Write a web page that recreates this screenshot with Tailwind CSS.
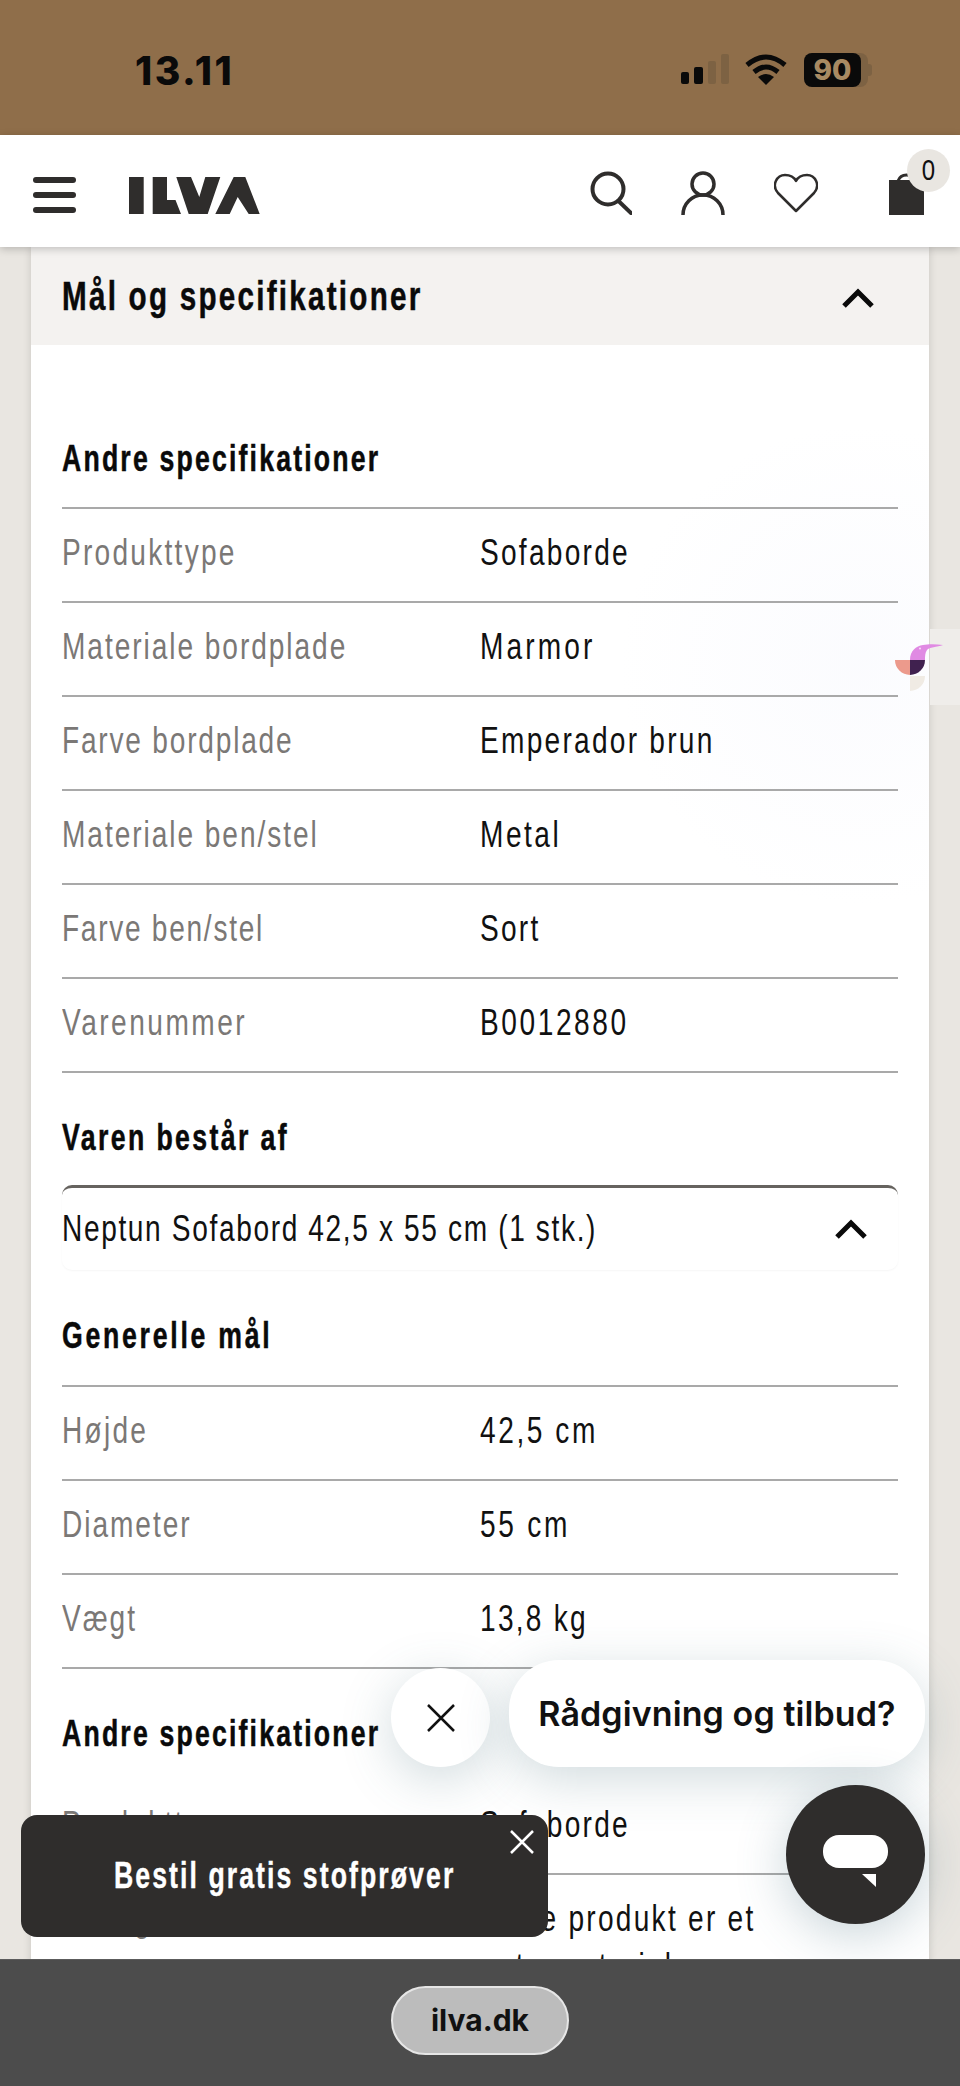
<!DOCTYPE html>
<html lang="en">
<head>
    <meta charset="UTF-8">
    <title>ILVA - Mål og specifikationer</title>
    <script src="https://cdn.jsdelivr.net/npm/@tailwindcss/browser@4"></script>
</head>
<body>
<div class="relative w-[960px] h-[2086px] overflow-hidden flex flex-col bg-[#e9e6e1] font-['Liberation_Sans',sans-serif]">

    <!-- status bar -->
    <div class="h-[135px] shrink-0 bg-[#8f6e4a] flex items-start justify-between pl-[135px] pr-[88px] pt-[47px]">
        <span class="font-['Inter',sans-serif] font-extrabold text-[39px] leading-[48px] text-[#0a0a0a] tracking-[2.5px]">13.11</span>
        <div class="flex items-center gap-[16px] pt-[6px]">
            <svg width="48" height="32" viewBox="0 0 48 32">
                <rect x="0" y="18" width="8" height="12" rx="2" fill="#0a0a0a"/>
                <rect x="13" y="13" width="9" height="17" rx="2" fill="#0a0a0a"/>
                <rect x="27" y="7" width="8" height="23" rx="2" fill="#7d6243"/>
                <rect x="40" y="0" width="8" height="30" rx="2" fill="#7d6243"/>
            </svg>
            <svg width="42" height="32" viewBox="0 0 42 32" fill="none" stroke="#0a0a0a" stroke-width="5">
                <path d="M2 11 Q21 -5 40 11"/>
                <path d="M9 18 Q21 8 33 18"/>
                <path d="M21 31 L13 23 Q21 17 29 23 Z" fill="#0a0a0a" stroke="none"/>
            </svg>
            <div class="relative w-[68px] h-[34px] ml-[1px]">
                <div class="absolute left-0 top-0 w-[64px] h-[34px] rounded-[8px] bg-[#7d6243]"></div>
                <div class="absolute right-0 top-[11px] w-[4px] h-[12px] rounded-r-[3px] bg-[#7d6243]"></div>
                <div class="absolute left-0 top-0 w-[57px] h-[34px] rounded-[8px] bg-[#0a0a0a] flex items-center justify-center font-['Inter',sans-serif] font-extrabold text-[28px] leading-none text-[#a88a62]">90</div>
            </div>
        </div>
    </div>

    <!-- header -->
    <div class="relative z-10 h-[112px] shrink-0 bg-white shadow-[0_2px_8px_rgba(0,0,0,0.22)] flex items-center pl-[33px] pr-[36px] pt-[8px]">
        <div class="flex flex-col gap-[9px] w-[43px]">
            <div class="h-[6px] rounded-full bg-[#2f2d2c]"></div>
            <div class="h-[6px] rounded-full bg-[#2f2d2c]"></div>
            <div class="h-[6px] rounded-full bg-[#2f2d2c]"></div>
        </div>
        <svg class="ml-[53px]" width="132" height="37" viewBox="0 0 132 37" fill="#2f2d2c">
            <rect x="0" y="0" width="14.700" height="37"/>
            <path d="M23.700 0H38V23H46.500L52 37H23.700Z"/>
            <path d="M47.300 0H62L70.300 20L76.300 0H91.300L78.700 37H59.700Z"/>
            <path d="M104.700 0H116.300L130.700 37H119.700L108.700 20L100.700 37H86.300Z"/>
        </svg>
        <div class="ml-auto flex items-center gap-[49px] -mt-[5px]">
            <svg width="42" height="44" viewBox="0 0 42 44" fill="none" stroke="#2f2d2c" stroke-width="4">
                <circle cx="18" cy="18" r="15.500"/>
                <path d="M28.500 30 L41 42" stroke-linecap="round"/>
            </svg>
            <svg width="44" height="44" viewBox="0 0 44 44" fill="none" stroke="#2f2d2c" stroke-width="3.500">
                <circle cx="22" cy="13" r="11"/>
                <path d="M2 44 A20 20 0 0 1 42 44"/>
            </svg>
            <svg width="44" height="40" viewBox="0 0 44 40" fill="none" stroke="#2f2d2c" stroke-width="2.500">
                <path d="M22 38 L4 20 C-3 12 3 2 11 2 C16 2 20 4 22 8 C24 4 28 2 33 2 C41 2 47 12 40 20 Z" stroke-linejoin="round"/>
            </svg>
            <div class="relative w-[35px] h-[44px] ml-[22px]">
                <svg class="absolute left-0 top-0" width="35" height="44" viewBox="0 0 35 44">
                    <path d="M9 10 A9 9 0 0 1 26 10" fill="none" stroke="#2f2d2c" stroke-width="3"/>
                    <rect x="0" y="9" width="35" height="35" fill="#2f2d2c"/>
                </svg>
                <div class="absolute left-[18px] -top-[22px] w-[43px] h-[43px] rounded-full bg-[#e9e6e1] flex items-center justify-center text-[30px] leading-none text-[#111]"><span class="inline-block scale-x-[0.8]">0</span></div>
            </div>
        </div>
    </div>

    <!-- page content -->
    <div class="flex-1 min-h-0 overflow-hidden">
        <div class="mx-[31px] bg-white bg-[radial-gradient(circle_at_829px_418px,rgba(240,242,252,0.28),rgba(255,255,255,0)_240px)] shadow-[0_0_8px_rgba(0,0,0,0.14)]">
            <div class="h-[98px] bg-[#f4f2f0] flex items-center justify-between pl-[31px] pr-[55px]">
                <h2 class="origin-left scale-x-[0.74] whitespace-nowrap font-bold text-[40px] tracking-[3.05px] leading-[48px] text-[#0a0a0a] [-webkit-text-stroke:0.5px_#0a0a0a]">Mål og specifikationer</h2>
                <svg class="mt-[4px]" width="32" height="20" viewBox="0 0 32 20" fill="none" stroke="#0a0a0a" stroke-width="5"><path d="M2 18 L16 4 L30 18"/></svg>
            </div>

            <div class="px-[31px]">
                <div class="pt-[90px] pb-[24px] border-b-2 border-[#a9a9a9]">
                    <h3 class="origin-left scale-x-[0.74] whitespace-nowrap font-bold text-[36px] tracking-[2.95px] leading-[48px] text-[#0a0a0a] [-webkit-text-stroke:0.5px_#0a0a0a]">Andre specifikationer</h3>
                </div>
                <div class="grid grid-cols-[418px_1fr] h-[94px] pb-[5px] items-center border-b-2 border-[#a9a9a9]"><span class="origin-left scale-x-[0.78] whitespace-nowrap text-[36px] tracking-[2.9px] text-[#7b7876]">Produkttype</span><span class="origin-left scale-x-[0.78] whitespace-nowrap text-[36px] tracking-[2.9px] text-[#111]">Sofaborde</span></div>
                <div class="grid grid-cols-[418px_1fr] h-[94px] pb-[5px] items-center border-b-2 border-[#a9a9a9]"><span class="origin-left scale-x-[0.78] whitespace-nowrap text-[36px] tracking-[2.5px] text-[#7b7876]">Materiale bordplade</span><span class="origin-left scale-x-[0.78] whitespace-nowrap text-[36px] tracking-[4px] text-[#111]">Marmor</span></div>
                <div class="grid grid-cols-[418px_1fr] h-[94px] pb-[5px] items-center border-b-2 border-[#a9a9a9]"><span class="origin-left scale-x-[0.78] whitespace-nowrap text-[36px] tracking-[2.3px] text-[#7b7876]">Farve bordplade</span><span class="origin-left scale-x-[0.78] whitespace-nowrap text-[36px] tracking-[2.9px] text-[#111]">Emperador brun</span></div>
                <div class="grid grid-cols-[418px_1fr] h-[94px] pb-[5px] items-center border-b-2 border-[#a9a9a9]"><span class="origin-left scale-x-[0.78] whitespace-nowrap text-[36px] tracking-[2.5px] text-[#7b7876]">Materiale ben/stel</span><span class="origin-left scale-x-[0.78] whitespace-nowrap text-[36px] tracking-[3.2px] text-[#111]">Metal</span></div>
                <div class="grid grid-cols-[418px_1fr] h-[94px] pb-[5px] items-center border-b-2 border-[#a9a9a9]"><span class="origin-left scale-x-[0.78] whitespace-nowrap text-[36px] tracking-[2.2px] text-[#7b7876]">Farve ben/stel</span><span class="origin-left scale-x-[0.78] whitespace-nowrap text-[36px] tracking-[2.9px] text-[#111]">Sort</span></div>
                <div class="grid grid-cols-[418px_1fr] h-[94px] pb-[5px] items-center border-b-2 border-[#a9a9a9]"><span class="origin-left scale-x-[0.78] whitespace-nowrap text-[36px] tracking-[3.2px] text-[#7b7876]">Varenummer</span><span class="origin-left scale-x-[0.78] whitespace-nowrap text-[36px] tracking-[3.3px] text-[#111]">B0012880</span></div>

                <div class="pt-[41px] pb-[23px]">
                    <h3 class="origin-left scale-x-[0.74] whitespace-nowrap font-bold text-[36px] tracking-[3.25px] leading-[48px] text-[#0a0a0a] [-webkit-text-stroke:0.5px_#0a0a0a]">Varen består af</h3>
                </div>
                <div class="h-[85px] rounded-[10px] border-t-[3px] border-[#66635f] flex items-center justify-between pr-[31px] shadow-[0_1px_2px_rgba(0,0,0,0.04)]">
                    <span class="origin-left scale-x-[0.78] whitespace-nowrap text-[36px] tracking-[2.1px] text-[#111]">Neptun Sofabord 42,5 x 55 cm (1 stk.)</span>
                    <svg width="32" height="20" viewBox="0 0 32 20" fill="none" stroke="#0a0a0a" stroke-width="5"><path d="M2 18 L16 4 L30 18"/></svg>
                </div>

                <div class="pt-[42px] pb-[25px] border-b-2 border-[#a9a9a9]">
                    <h3 class="origin-left scale-x-[0.74] whitespace-nowrap font-bold text-[36px] tracking-[3.7px] leading-[48px] text-[#0a0a0a] [-webkit-text-stroke:0.5px_#0a0a0a]">Generelle mål</h3>
                </div>
                <div class="grid grid-cols-[418px_1fr] h-[94px] pb-[5px] items-center border-b-2 border-[#a9a9a9]"><span class="origin-left scale-x-[0.78] whitespace-nowrap text-[36px] tracking-[2.9px] text-[#7b7876]">Højde</span><span class="origin-left scale-x-[0.78] whitespace-nowrap text-[36px] tracking-[3.3px] text-[#111]">42,5 cm</span></div>
                <div class="grid grid-cols-[418px_1fr] h-[94px] pb-[5px] items-center border-b-2 border-[#a9a9a9]"><span class="origin-left scale-x-[0.78] whitespace-nowrap text-[36px] tracking-[2.5px] text-[#7b7876]">Diameter</span><span class="origin-left scale-x-[0.78] whitespace-nowrap text-[36px] tracking-[3.5px] text-[#111]">55 cm</span></div>
                <div class="grid grid-cols-[418px_1fr] h-[94px] pb-[5px] items-center border-b-2 border-[#a9a9a9]"><span class="origin-left scale-x-[0.78] whitespace-nowrap text-[36px] tracking-[2.5px] text-[#7b7876]">Vægt</span><span class="origin-left scale-x-[0.78] whitespace-nowrap text-[36px] tracking-[2.9px] text-[#111]">13,8 kg</span></div>

                <div class="pt-[41px] pb-[23px]">
                    <h3 class="origin-left scale-x-[0.74] whitespace-nowrap font-bold text-[36px] tracking-[2.95px] leading-[48px] text-[#0a0a0a] [-webkit-text-stroke:0.5px_#0a0a0a]">Andre specifikationer</h3>
                </div>
                <div class="grid grid-cols-[418px_1fr] h-[94px] pb-[5px] items-center border-b-2 border-[#a9a9a9]"><span class="origin-left scale-x-[0.78] whitespace-nowrap text-[36px] tracking-[2.9px] text-[#7b7876]">Produkttype</span><span class="origin-left scale-x-[0.78] whitespace-nowrap text-[36px] tracking-[2.9px] text-[#111]">Sofaborde</span></div>
                <div class="grid grid-cols-[418px_1fr] pt-[20px] leading-[48px]"><span class="origin-left scale-x-[0.78] whitespace-nowrap text-[36px] tracking-[2.9px] text-[#7b7876]">Vedligeholdelse</span><span class="origin-left scale-x-[0.78] whitespace-nowrap text-[36px] tracking-[2.9px] text-[#111]">Dette produkt er et<br>naturmateriale</span></div>
            </div>
        </div>
    </div>

    <!-- browser bar -->
    <div class="relative z-20 h-[127px] shrink-0 bg-[#4c4c4c] border-t border-[#5c5c5c] flex justify-center pt-[26px]">
        <div class="w-[178px] h-[69px] rounded-full bg-[#bcbcbc] border-2 border-[#e6e6e6] flex items-center justify-center font-['Inter',sans-serif] font-bold text-[30px] text-[#111]">ilva.dk</div>
    </div>

    <!-- side widget -->
    <div class="absolute left-[930px] top-[629px] w-[30px] h-[76px] bg-[#efedea]"></div>
    <svg class="absolute left-[895px] top-[644px] z-10" width="48" height="48" viewBox="0 0 48 48">
        <path d="M0 16 H15 V31 A15 15 0 0 1 0 16 Z" fill="#ec9a8c"/>
        <path d="M15 16 H30 A15 15 0 0 1 15 31 Z" fill="#40214f"/>
        <path d="M15 16 C15 7 21 2 28 1 C33 0 41 0 48 1 C42 3 34 3 32 6 C30 9 30 12 30 16 Z" fill="#e08ae3"/>
        <circle cx="25" cy="4.500" r="1" fill="#f6dcf6"/>
        <path d="M15 32 H30 A15 15 0 0 1 15 47 Z" fill="#f0ebe4"/>
    </svg>

    <!-- chat widget -->
    <div class="absolute left-[391px] top-[1668px] w-[99px] h-[99px] rounded-full bg-white shadow-[0_12px_50px_rgba(70,110,125,0.25)] flex items-center justify-center z-10">
        <svg width="28" height="28" viewBox="0 0 28 28" fill="none" stroke="#111" stroke-width="2.500"><path d="M1 1 L27 27 M27 1 L1 27"/></svg>
    </div>
    <div class="absolute left-[509px] top-[1660px] w-[416px] h-[107px] rounded-[50px] bg-white shadow-[0_12px_50px_rgba(70,110,125,0.25)] flex items-center justify-center font-['Inter',sans-serif] font-semibold text-[34px] tracking-[0.1px] text-[#111] z-10">Rådgivning og tilbud?</div>
    <div class="absolute left-[786px] top-[1785px] w-[139px] h-[139px] rounded-full bg-[#2f2d2c] shadow-[0_10px_50px_rgba(70,110,125,0.3)] z-10">
        <div class="absolute left-[37px] top-[50px] w-[65px] h-[33px] rounded-[16px] bg-white"></div>
        <svg class="absolute left-[76px] top-[89px]" width="14" height="13" viewBox="0 0 14 13"><path d="M0 0H14V13Z" fill="#fff"/></svg>
    </div>

    <!-- fabric samples toast -->
    <div class="absolute left-[21px] top-[1815px] w-[527px] h-[122px] rounded-[16px] bg-[#2f2d2c] flex items-center justify-center z-10">
        <span class="scale-x-[0.74] whitespace-nowrap font-bold text-[36px] tracking-[2.8px] text-white [-webkit-text-stroke:0.4px_#fff]">Bestil gratis stofprøver</span>
        <svg class="absolute right-[14px] top-[15px]" width="24" height="24" viewBox="0 0 24 24" fill="none" stroke="#fff" stroke-width="2.500"><path d="M1 1 L23 23 M23 1 L1 23"/></svg>
    </div>
</div>
</body>
</html>
